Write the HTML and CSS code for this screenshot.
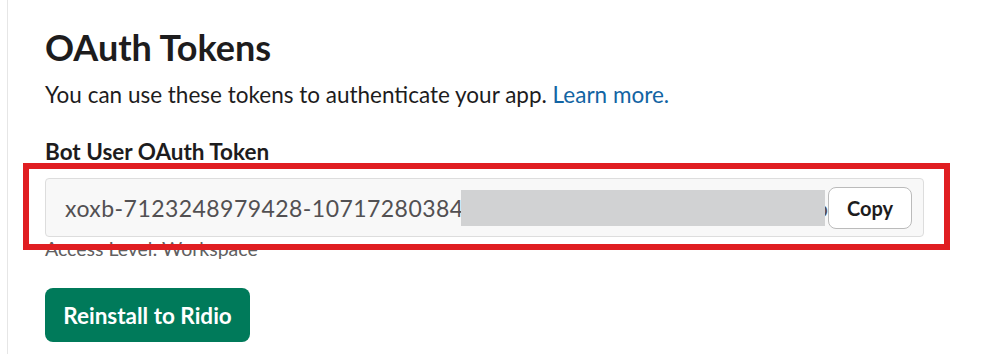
FILE: index.html
```html
<!DOCTYPE html>
<html>
<head>
<meta charset="utf-8">
<link rel="stylesheet" href="styles.css">
</head>
<body>
<div class="page">
  <section class="panel">
    <h1 class="title">OAuth Tokens</h1>
    <p class="desc">You can use these tokens to authenticate your app. <a class="link" href="#">Learn more.</a></p>
    <div class="field">
      <h2 class="label">Bot User OAuth Token</h2>
      <div class="token-row">
        <span class="token">xoxb-7123248979428-10717280384</span>
        <span class="redact"></span>
        <span class="tail"><span>o</span></span>
        <button class="copy">Copy</button>
      </div>
      <div class="access">Access Level: Workspace</div>
      <div class="highlight"></div>
    </div>
    <button class="reinstall">Reinstall to Ridio</button>
  </section>
</div>
</body>
</html>
```
FILE: styles.css
```css
html, body {
  margin: 0;
  padding: 0;
  background: #ffffff;
}
body {
  font-family: Lato, "Noto Sans", "Liberation Sans", sans-serif;
  color: #1d1c1d;
}
.page {
  padding-left: 7px;
  height: 354px;
  overflow: hidden;
}
.panel {
  border-left: 1px solid #e6e6e6;
  padding: 22px 0 0 37px;
  height: 354px;
  box-sizing: border-box;
}
.title {
  margin: 0;
  font-size: 36px;
  font-weight: 700;
  line-height: 50px;
  color: #1d1c1d;
}
.desc {
  margin: 8px 0 0;
  font-size: 22.5px;
  line-height: 30px;
  color: #1d1c1d;
}
.link {
  color: #1264a3;
  text-decoration: none;
}
.field {
  position: relative;
  width: 879px;
  margin-top: 28px;
}
.label {
  margin: 0;
  font-size: 22.5px;
  font-weight: 700;
  line-height: 28px;
}
.token-row {
  margin-top: 12px;
  height: 59px;
  box-sizing: border-box;
  border: 1px solid #dddddd;
  border-radius: 4px;
  background: #f8f8f8;
  display: flex;
  align-items: center;
  padding: 0 11px 0 19px;
  overflow: hidden;
}
.token {
  width: 396px;
  flex: none;
  overflow: hidden;
  font-size: 23px;
  color: #525052;
  white-space: nowrap;
  letter-spacing: 0.45px;
}
.redact {
  width: 364px;
  height: 36px;
  background: #d1d2d3;
  flex: none;
}
.tail {
  width: 3px;
  flex: none;
  overflow: hidden;
  display: flex;
  justify-content: flex-end;
  font-size: 23px;
  color: #525052;
}
.copy {
  width: 84px;
  height: 42px;
  background: #ffffff;
  border: 1px solid #bbbbbb;
  border-radius: 8px;
  font-family: Lato, "Noto Sans", "Liberation Sans", sans-serif;
  font-size: 20px;
  font-weight: 700;
  color: #1d1c1d;
  flex: none;
  padding: 0;
}
.access {
  font-size: 19.5px;
  color: #616061;
  line-height: 24px;
}
.highlight {
  position: absolute;
  left: -22px;
  top: 25px;
  width: 927px;
  height: 87px;
  box-sizing: border-box;
  border: 6px solid #e01e22;
}
.reinstall {
  display: block;
  margin-top: 27px;
  width: 205px;
  height: 54px;
  background: #007a5a;
  color: #ffffff;
  border: none;
  border-radius: 8px;
  font-family: Lato, "Noto Sans", "Liberation Sans", sans-serif;
  font-size: 22.5px;
  font-weight: 700;
  padding: 0;
}
```
